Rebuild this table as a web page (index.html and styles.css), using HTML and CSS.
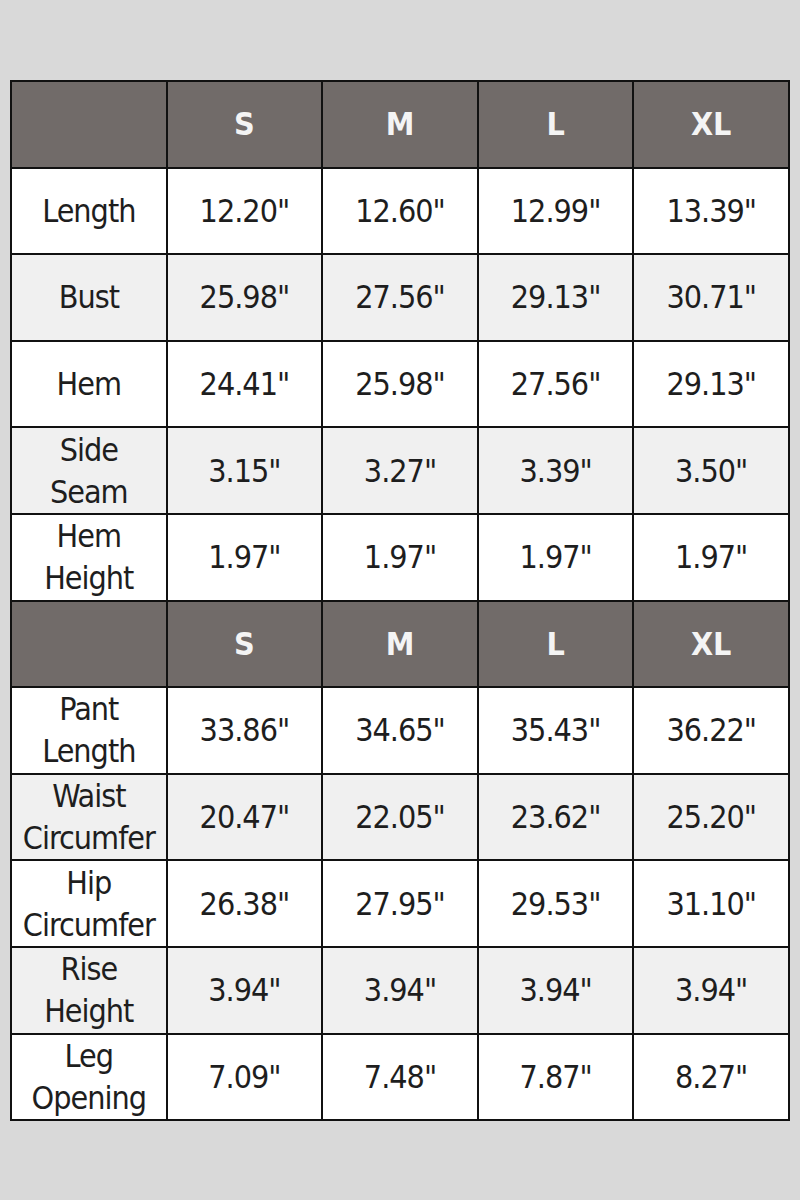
FILE: index.html
```html
<!DOCTYPE html>
<html>
<head>
<meta charset="utf-8">
<link rel="stylesheet" href="styles.css">
</head>
<body>
<div class="page">
<table class="chart">
<colgroup><col><col><col><col><col></colgroup>
<tr class="head"><td></td><td>S</td><td>M</td><td>L</td><td>XL</td></tr>
<tr class="w"><td>Length</td><td>12.20"</td><td>12.60"</td><td>12.99"</td><td>13.39"</td></tr>
<tr class="g"><td>Bust</td><td>25.98"</td><td>27.56"</td><td>29.13"</td><td>30.71"</td></tr>
<tr class="w"><td>Hem</td><td>24.41"</td><td>25.98"</td><td>27.56"</td><td>29.13"</td></tr>
<tr class="g"><td>Side<br>Seam</td><td>3.15"</td><td>3.27"</td><td>3.39"</td><td>3.50"</td></tr>
<tr class="w"><td>Hem<br>Height</td><td>1.97"</td><td>1.97"</td><td>1.97"</td><td>1.97"</td></tr>
<tr class="head"><td></td><td>S</td><td>M</td><td>L</td><td>XL</td></tr>
<tr class="w"><td>Pant<br>Length</td><td>33.86"</td><td>34.65"</td><td>35.43"</td><td>36.22"</td></tr>
<tr class="g"><td>Waist<br>Circumfer</td><td>20.47"</td><td>22.05"</td><td>23.62"</td><td>25.20"</td></tr>
<tr class="w"><td>Hip<br>Circumfer</td><td>26.38"</td><td>27.95"</td><td>29.53"</td><td>31.10"</td></tr>
<tr class="g"><td>Rise<br>Height</td><td>3.94"</td><td>3.94"</td><td>3.94"</td><td>3.94"</td></tr>
<tr class="w"><td>Leg<br>Opening</td><td>7.09"</td><td>7.48"</td><td>7.87"</td><td>8.27"</td></tr>
</table>
</div>
</body>
</html>
```
FILE: styles.css
```css
html, body {
  margin: 0;
  padding: 0;
  background: #d9d9d9;
}
.page {
  width: 800px;
  height: 1200px;
  padding: 80px 10px 0 10px;
  box-sizing: border-box;
}
.chart {
  border-collapse: collapse;
  table-layout: fixed;
  width: 780px;
  border: 2px solid #111;
  font-family: "Liberation Sans Narrow", "DejaVu Sans Condensed", "Roboto", sans-serif;
  font-size: 32px;
  letter-spacing: -1px;
  line-height: 42px;
  color: #1e1e1e;
}
.chart td {
  border: 2px solid #111;
  height: 84.6px;
  padding: 0;
  text-align: center;
  vertical-align: middle;
}
.chart tr.head td {
  background: #716b69;
  color: #f4f4f4;
  font-weight: bold;
  letter-spacing: 0;
}
.chart tr.w td { background: #ffffff; }
.chart tr.g td { background: #f0f0f0; }
```
